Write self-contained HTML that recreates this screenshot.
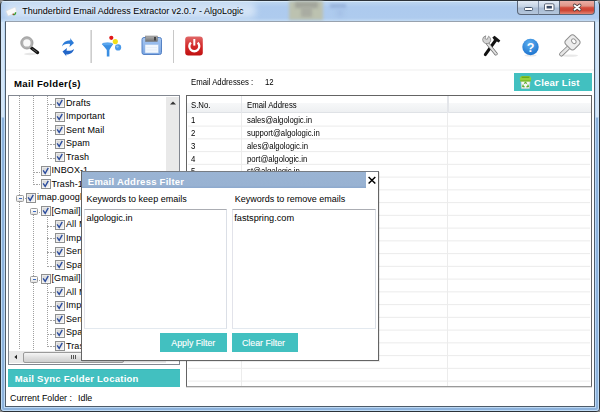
<!DOCTYPE html><html><head><meta charset="utf-8"><style>
*{margin:0;padding:0;box-sizing:border-box}
html,body{width:600px;height:412px;overflow:hidden;background:#8c8c8c}
body{position:relative;font-family:"Liberation Sans",sans-serif;color:#000}
.a{position:absolute}
.t{position:absolute;white-space:nowrap;line-height:1}
.btn{position:absolute;top:1px;height:14px;border:1px solid #5a6678;border-top:none}
.teal{background:#42c0c0}
.sep{position:absolute;width:1px;background:#b4b4b4}
.cb{position:absolute;width:10px;height:10px;border:1px solid #8f9090;background:linear-gradient(135deg,#d0d0d0,#f6f6f6);box-shadow:inset 0 0 0 1px rgba(255,255,255,0.5)}
.dv{position:absolute;width:1px;background:repeating-linear-gradient(180deg,#a0a0a0 0 1px,transparent 1px 2px)}
.dh{position:absolute;height:1px;background:repeating-linear-gradient(90deg,#a4a4a4 0 2px,transparent 2px 3px)}
.tr{position:absolute;white-space:nowrap;line-height:1;font-size:9px;letter-spacing:0.1px}
.pm{position:absolute;width:8px;height:7px;border:1px solid #9a9a9a;border-radius:1.5px;background:linear-gradient(180deg,#fff,#e2e2e2)}
.pm:after{content:"";position:absolute;left:1.5px;top:2px;width:3px;height:1.2px;background:#3a6ac0}
.gl{position:absolute;left:188px;width:402px;height:1px;background:#ececec}
.gt{position:absolute;font-size:8.6px;white-space:nowrap;line-height:1;transform:scaleX(0.905);transform-origin:0 0}
</style></head><body>
<div class="a" style="left:0;top:0;width:600px;height:412px;border:1px solid #2c3238;border-radius:5px 5px 4px 4px;background:linear-gradient(180deg,#d0e4f8 0,#d0e4f8 1px,#bcd5f0 1px,#adcaee 6px,#aecbee 17px,#bcd6f2 19px,#c4dcf4 20px,#c4dcf4 21px,#d4e6f8 21px,#d4e6f8 116px,#8cb2dc 117px,#8cb2dc 100%)"></div>
<div class="a" style="left:1px;top:117px;width:598px;height:294px;border:1px solid #c0dcf6;border-top:none;border-radius:0 0 3px 3px"></div>
<div class="a" style="left:1px;top:1px;width:598px;height:2px;border-radius:4px 4px 0 0;border-top:1px solid #d8eafa"></div>
<div class="a" style="left:289px;top:1px;width:34px;height:19px;background:#bcc2b0;filter:blur(1.5px)"></div>
<div class="a" style="left:295px;top:2px;width:23px;height:6px;background:#a2a59c;filter:blur(1.6px)"></div>
<div class="a" style="left:301px;top:7px;width:11px;height:10px;background:#a9aca2;filter:blur(1.6px)"></div>
<div class="a" style="left:330px;top:4px;width:16px;height:4px;background:#98b4dc;filter:blur(1.5px)"></div>
<div class="a" style="left:337px;top:9px;width:6px;height:8px;background:#a4c0e6;filter:blur(2px)"></div>
<div class="a" style="left:520px;top:1px;width:1px;height:1px"></div>
<div class="a" style="left:4px;top:3px;width:252px;height:15px;background:rgba(235,244,252,0.6);filter:blur(3px);border-radius:6px"></div>
<svg class="a" style="left:4px;top:3.5px" width="14" height="13"><path d="M2 7 L11.5 3 L12.5 8.5 L4 12Z" fill="#fafafa" stroke="#d8d8d8" stroke-width="0.5"/><path d="M9 10.5 Q11.5 11 11.6 8.2" fill="none" stroke="#3aa030" stroke-width="1.4"/><circle cx="9.2" cy="10.3" r="0.8" fill="#a04020"/></svg>
<div class="t" style="left:22.3px;top:7px;font-size:9px;color:#000;text-shadow:0 0 4px rgba(235,245,255,0.9)">Thunderbird Email Address Extractor v2.0.7 - AlgoLogic</div>
<div class="btn" style="left:517px;width:22px;border-radius:0 0 0 4px;background:linear-gradient(180deg,#e3ebf5,#c3d2e4 45%,#a9bcd4 55%,#b4c6dc)"></div>
<div class="btn" style="left:538px;width:22px;border-left:1px solid #8090a8;background:linear-gradient(180deg,#e3ebf5,#c3d2e4 45%,#a9bcd4 55%,#b4c6dc)"></div>
<div class="btn" style="left:559px;width:36px;border-radius:0 0 4px 0;background:linear-gradient(180deg,#eaaea6 0,#e09486 38%,#d24c3c 52%,#cc4434 72%,#e28474 100%)"></div>
<div class="a" style="left:524px;top:7px;width:9px;height:4px;background:#fff;border:1px solid #44546a;border-radius:1.5px"></div>
<svg class="a" style="left:540px;top:0px" width="18" height="14"><rect x="4.5" y="3.8" width="9.5" height="6.8" rx="1.2" fill="#fff" stroke="#5a6678" stroke-width="1"/><rect x="6.6" y="5.9" width="5.3" height="2.6" fill="#3a4a64"/></svg>
<svg class="a" style="left:570px;top:1px" width="14" height="12"><path d="M4.6 4.4 L9.7 8.6 M9.7 4.4 L4.6 8.6" stroke="#4a3a3a" stroke-width="3.4" stroke-linecap="round"/><path d="M4.6 4.4 L9.7 8.6 M9.7 4.4 L4.6 8.6" stroke="#fff" stroke-width="1.9" stroke-linecap="round"/></svg>
<div class="a" style="left:4px;top:21px;width:592px;height:387px;border:1px solid #bcd8f4;border-top:none"></div>
<div class="a" style="left:5px;top:21px;width:590px;height:386px;border:1px solid #4e5c6a;border-top-color:#98a2ae;background:#fff"></div>
<div class="a" style="left:6px;top:69px;width:588px;height:2px;background:#f7f7f7"></div>
<div class="sep" style="left:90px;top:30px;width:2px;height:33px;background:linear-gradient(90deg,#e0e0e0 50%,#cdcdcd 50%)"></div>
<div class="sep" style="left:173px;top:30px;height:33px;background:#c8c8c8"></div>

<svg class="a" style="left:0;top:0" width="600" height="70">
 <defs>
  <linearGradient id="gpow" x1="0" y1="0" x2="0" y2="1"><stop offset="0" stop-color="#e06868"/><stop offset="0.5" stop-color="#d42a2a"/><stop offset="1" stop-color="#c01010"/></linearGradient>
  <linearGradient id="gflop" x1="0" y1="0" x2="0" y2="1"><stop offset="0" stop-color="#a8c8f2"/><stop offset="1" stop-color="#78a4e2"/></linearGradient><linearGradient id="gshut" x1="0" y1="0" x2="0" y2="1"><stop offset="0" stop-color="#b4b4b4"/><stop offset="1" stop-color="#6e6e6e"/></linearGradient>
  <radialGradient id="ghelp" cx="0.45" cy="0.3" r="0.75"><stop offset="0" stop-color="#5fb0f0"/><stop offset="1" stop-color="#1a70cc"/></radialGradient>
 </defs>
 <!-- magnifier -->
 <ellipse cx="30" cy="54" rx="6" ry="1.2" fill="#e6e6e6"/>
 <line x1="31.5" y1="48" x2="37.6" y2="52.6" stroke="#111" stroke-width="3.2" stroke-linecap="round"/>
 <line x1="32.5" y1="49" x2="36.8" y2="52" stroke="#777" stroke-width="0.8" stroke-linecap="round"/>
 <circle cx="26.9" cy="42.9" r="5" fill="#f8f8f8" stroke="#b0b0b0" stroke-width="2.6"/>
 <circle cx="26.9" cy="42.9" r="6.2" fill="none" stroke="#8a8a8a" stroke-width="0.5"/>
 <!-- refresh -->
 <path d="M62 46.5 C63 42 66 40.5 70.5 40.2 L70 38 L74 43 L69.5 47 L70 44 C66 43.5 63.5 44.5 62 46.5Z" fill="#2b7bd8"/>
 <path d="M74 49 C73 53 70 54.5 66 54.5 L66.5 56.5 L62.5 51.5 L67 48 L66.5 50.8 C70 51 72.5 50.5 74 49Z" fill="#2266c8"/>
 <!-- funnel -->
 <path d="M101.8 44 Q107.5 41.6 113.2 44 Q111 47 109.4 50 L109.4 56.6 L106.8 56.6 L106.8 50 Q104.6 47 101.8 44Z" fill="#3a8ee2"/>
 <ellipse cx="107.5" cy="43.9" rx="5.2" ry="1.3" fill="#5aa6ee"/>
 <circle cx="111.3" cy="37.8" r="2.1" fill="#e01818"/>
 <circle cx="115.3" cy="41.6" r="2.6" fill="#f2e01a"/>
 <circle cx="118.1" cy="47.4" r="3.1" fill="#4a9aea"/>
 <circle cx="117.4" cy="46.6" r="1.2" fill="#8cc4f6"/>
 <!-- floppy -->
 <rect x="142" y="37.5" width="19.5" height="17" rx="2" fill="url(#gflop)" stroke="#5682c4"/>
 <rect x="145.5" y="36" width="12" height="5.5" fill="url(#gshut)" stroke="#777" stroke-width="0.5"/>
 <rect x="154" y="37" width="2" height="3.5" fill="#444"/>
 <rect x="145" y="44.5" width="13.5" height="8.5" fill="#f2f7fd" stroke="#9cbce6" stroke-width="0.5"/><path d="M146.5 47.5 H157 M146.5 50 H157" stroke="#dce8f6" stroke-width="0.6"/>
 <!-- power -->
 <rect x="185.2" y="36.5" width="17.6" height="19" rx="3" fill="url(#gpow)"/>
 <path d="M190.9 42.6 A5 5 0 1 0 197.7 42.6" fill="none" stroke="#fff" stroke-width="2.3"/>
 <line x1="194.3" y1="39" x2="194.3" y2="45.6" stroke="#fff" stroke-width="2"/>
 <!-- tools -->
 <line x1="495.5" y1="40.5" x2="485.3" y2="54.6" stroke="#111" stroke-width="3" stroke-linecap="round"/>
 <path d="M492.3 37.6 L494.6 35.8 L500.3 40.6 L498.8 42.6 L494.3 40.3Z" fill="#151515"/>
 <line x1="487.5" y1="43.5" x2="496" y2="53.8" stroke="#666" stroke-width="3.4" stroke-linecap="round"/>
 <line x1="487.5" y1="43.5" x2="496" y2="53.8" stroke="#e0e0e0" stroke-width="2" stroke-linecap="round"/>
 <path d="M482.6 39.5 A4.2 4.2 0 0 0 490 42.2 A4.2 4.2 0 0 0 488.6 36.2 L487.2 39.4 L485 38.6 L485.8 35.8 A4.2 4.2 0 0 0 482.6 39.5Z" fill="#d4d4d4" stroke="#777" stroke-width="0.7"/>
 <!-- help -->
 <ellipse cx="530.5" cy="55.5" rx="6" ry="1" fill="#e8e8e8"/>
 <circle cx="530.5" cy="47" r="8.2" fill="url(#ghelp)"/>
 <text x="530.5" y="52.3" font-family="Liberation Sans" font-weight="bold" font-size="12.5" fill="#fff" text-anchor="middle">?</text>
 <!-- key -->
 <ellipse cx="570" cy="55.6" rx="8" ry="1.1" fill="#e8e8e8"/>
 <line x1="569" y1="47" x2="561.3" y2="54.3" stroke="#8a8a8a" stroke-width="4.4" stroke-linecap="round"/>
 <line x1="569" y1="47" x2="561.3" y2="54.3" stroke="#e6e6e6" stroke-width="2.6" stroke-linecap="round"/>
 <rect x="566.3" y="36.2" width="12.4" height="12.4" rx="3.2" fill="#ececec" stroke="#8e8e8e" stroke-width="1" transform="rotate(45 572.5 42.4)"/>
 <ellipse cx="573.8" cy="41.2" rx="2.6" ry="1.9" fill="#fff" stroke="#9a9a9a" stroke-width="1" transform="rotate(45 573.8 41.2)"/>
</svg>

<div class="t" style="left:14px;top:78.6px;font-size:9.6px;letter-spacing:0.32px;font-weight:bold">Mail Folder(s)</div>
<div class="a" style="left:8px;top:95px;width:172px;height:270px;border:1px solid #828790;background:#fff;overflow:hidden"></div>
<div class="dv" style="left:19px;top:96.0px;height:254.0px"></div>
<div class="dv" style="left:33px;top:96.0px;height:87.8px"></div>
<div class="dv" style="left:33px;top:210.8px;height:139.2px"></div>
<div class="dv" style="left:47px;top:96.0px;height:60.8px"></div>
<div class="dv" style="left:47px;top:214.8px;height:50.0px"></div>
<div class="dv" style="left:47px;top:282.2px;height:63.5px"></div>
<div class="dh" style="left:47px;top:104px;width:8px"></div>
<div class="cb" style="left:55px;top:98.00px"></div>
<svg class="a" style="left:55px;top:98.00px" width="10" height="10"><path d="M2.1 4.4 L4.2 7.4 L7.3 1.9" fill="none" stroke="#2b4c9e" stroke-width="1.35"/></svg>
<div class="tr" style="left:66px;top:98.55px">Drafts</div>
<div class="dh" style="left:47px;top:118px;width:8px"></div>
<div class="cb" style="left:55px;top:111.50px"></div>
<svg class="a" style="left:55px;top:111.50px" width="10" height="10"><path d="M2.1 4.4 L4.2 7.4 L7.3 1.9" fill="none" stroke="#2b4c9e" stroke-width="1.35"/></svg>
<div class="tr" style="left:66px;top:112.05px">Important</div>
<div class="dh" style="left:47px;top:130px;width:8px"></div>
<div class="cb" style="left:55px;top:125.00px"></div>
<svg class="a" style="left:55px;top:125.00px" width="10" height="10"><path d="M2.1 4.4 L4.2 7.4 L7.3 1.9" fill="none" stroke="#2b4c9e" stroke-width="1.35"/></svg>
<div class="tr" style="left:66px;top:125.55px">Sent Mail</div>
<div class="dh" style="left:47px;top:144px;width:8px"></div>
<div class="cb" style="left:55px;top:138.50px"></div>
<svg class="a" style="left:55px;top:138.50px" width="10" height="10"><path d="M2.1 4.4 L4.2 7.4 L7.3 1.9" fill="none" stroke="#2b4c9e" stroke-width="1.35"/></svg>
<div class="tr" style="left:66px;top:139.05px">Spam</div>
<div class="dh" style="left:47px;top:158px;width:8px"></div>
<div class="cb" style="left:55px;top:152.00px"></div>
<svg class="a" style="left:55px;top:152.00px" width="10" height="10"><path d="M2.1 4.4 L4.2 7.4 L7.3 1.9" fill="none" stroke="#2b4c9e" stroke-width="1.35"/></svg>
<div class="tr" style="left:66px;top:152.55px">Trash</div>
<div class="dh" style="left:33px;top:172px;width:7px"></div>
<div class="cb" style="left:40.5px;top:165.50px"></div>
<svg class="a" style="left:40.5px;top:165.50px" width="10" height="10"><path d="M2.1 4.4 L4.2 7.4 L7.3 1.9" fill="none" stroke="#2b4c9e" stroke-width="1.35"/></svg>
<div class="tr" style="left:51.5px;top:166.05px">INBOX-1</div>
<div class="dh" style="left:33px;top:184px;width:7px"></div>
<div class="cb" style="left:40.5px;top:179.00px"></div>
<svg class="a" style="left:40.5px;top:179.00px" width="10" height="10"><path d="M2.1 4.4 L4.2 7.4 L7.3 1.9" fill="none" stroke="#2b4c9e" stroke-width="1.35"/></svg>
<div class="tr" style="left:51.5px;top:179.55px">Trash-1</div>
<div class="dh" style="left:19px;top:198px;width:7px"></div>
<div class="pm" style="left:16px;top:195px"></div>
<div class="cb" style="left:26px;top:192.50px"></div>
<svg class="a" style="left:26px;top:192.50px" width="10" height="10"><path d="M2.1 4.4 L4.2 7.4 L7.3 1.9" fill="none" stroke="#2b4c9e" stroke-width="1.35"/></svg>
<div class="tr" style="left:37px;top:193.05px">imap.googlemail.com</div>
<div class="dh" style="left:33px;top:212px;width:7px"></div>
<div class="pm" style="left:30px;top:208px"></div>
<div class="cb" style="left:40.5px;top:206.00px"></div>
<svg class="a" style="left:40.5px;top:206.00px" width="10" height="10"><path d="M2.1 4.4 L4.2 7.4 L7.3 1.9" fill="none" stroke="#2b4c9e" stroke-width="1.35"/></svg>
<div class="tr" style="left:51.5px;top:206.55px">[Gmail]</div>
<div class="dh" style="left:47px;top:226px;width:8px"></div>
<div class="cb" style="left:55px;top:219.50px"></div>
<svg class="a" style="left:55px;top:219.50px" width="10" height="10"><path d="M2.1 4.4 L4.2 7.4 L7.3 1.9" fill="none" stroke="#2b4c9e" stroke-width="1.35"/></svg>
<div class="tr" style="left:66px;top:220.05px">All Mail</div>
<div class="dh" style="left:47px;top:238px;width:8px"></div>
<div class="cb" style="left:55px;top:233.00px"></div>
<svg class="a" style="left:55px;top:233.00px" width="10" height="10"><path d="M2.1 4.4 L4.2 7.4 L7.3 1.9" fill="none" stroke="#2b4c9e" stroke-width="1.35"/></svg>
<div class="tr" style="left:66px;top:233.55px">Important</div>
<div class="dh" style="left:47px;top:252px;width:8px"></div>
<div class="cb" style="left:55px;top:246.50px"></div>
<svg class="a" style="left:55px;top:246.50px" width="10" height="10"><path d="M2.1 4.4 L4.2 7.4 L7.3 1.9" fill="none" stroke="#2b4c9e" stroke-width="1.35"/></svg>
<div class="tr" style="left:66px;top:247.05px">Sent Mail</div>
<div class="dh" style="left:47px;top:266px;width:8px"></div>
<div class="cb" style="left:55px;top:260.00px"></div>
<svg class="a" style="left:55px;top:260.00px" width="10" height="10"><path d="M2.1 4.4 L4.2 7.4 L7.3 1.9" fill="none" stroke="#2b4c9e" stroke-width="1.35"/></svg>
<div class="tr" style="left:66px;top:260.55px">Spam</div>
<div class="dh" style="left:33px;top:280px;width:7px"></div>
<div class="pm" style="left:30px;top:276px"></div>
<div class="cb" style="left:40.5px;top:273.50px"></div>
<svg class="a" style="left:40.5px;top:273.50px" width="10" height="10"><path d="M2.1 4.4 L4.2 7.4 L7.3 1.9" fill="none" stroke="#2b4c9e" stroke-width="1.35"/></svg>
<div class="tr" style="left:51.5px;top:274.05px">[Gmail]</div>
<div class="dh" style="left:47px;top:292px;width:8px"></div>
<div class="cb" style="left:55px;top:287.00px"></div>
<svg class="a" style="left:55px;top:287.00px" width="10" height="10"><path d="M2.1 4.4 L4.2 7.4 L7.3 1.9" fill="none" stroke="#2b4c9e" stroke-width="1.35"/></svg>
<div class="tr" style="left:66px;top:287.55px">All Mail</div>
<div class="dh" style="left:47px;top:306px;width:8px"></div>
<div class="cb" style="left:55px;top:300.50px"></div>
<svg class="a" style="left:55px;top:300.50px" width="10" height="10"><path d="M2.1 4.4 L4.2 7.4 L7.3 1.9" fill="none" stroke="#2b4c9e" stroke-width="1.35"/></svg>
<div class="tr" style="left:66px;top:301.05px">Important</div>
<div class="dh" style="left:47px;top:320px;width:8px"></div>
<div class="cb" style="left:55px;top:314.00px"></div>
<svg class="a" style="left:55px;top:314.00px" width="10" height="10"><path d="M2.1 4.4 L4.2 7.4 L7.3 1.9" fill="none" stroke="#2b4c9e" stroke-width="1.35"/></svg>
<div class="tr" style="left:66px;top:314.55px">Sent Mail</div>
<div class="dh" style="left:47px;top:334px;width:8px"></div>
<div class="cb" style="left:55px;top:327.50px"></div>
<svg class="a" style="left:55px;top:327.50px" width="10" height="10"><path d="M2.1 4.4 L4.2 7.4 L7.3 1.9" fill="none" stroke="#2b4c9e" stroke-width="1.35"/></svg>
<div class="tr" style="left:66px;top:328.05px">Spam</div>
<div class="dh" style="left:47px;top:346px;width:8px"></div>
<div class="cb" style="left:55px;top:341.00px"></div>
<svg class="a" style="left:55px;top:341.00px" width="10" height="10"><path d="M2.1 4.4 L4.2 7.4 L7.3 1.9" fill="none" stroke="#2b4c9e" stroke-width="1.35"/></svg>
<div class="tr" style="left:66px;top:341.55px">Trash</div>
<div class="a" style="left:166px;top:97px;width:13px;height:254px;background:#e9e9e9"></div>
<svg class="a" style="left:169px;top:100px" width="8" height="6"><path d="M1 4.5 L4 1.5 L7 4.5Z" fill="#333"/></svg>
<div class="a" style="left:9px;top:351px;width:157px;height:12px;background:#e9e9e9"></div>
<svg class="a" style="left:13px;top:353px" width="6" height="8"><path d="M4 1.8 L1.4 4 L4 6.2Z" fill="#222"/></svg>
<div class="a" style="left:23px;top:352px;width:101px;height:11px;border:1px solid #9a9a9a;border-radius:2px;background:linear-gradient(180deg,#f6f6f6,#e0e0e0 50%,#cfcfcf)"></div>
<div class="a" style="left:71px;top:355px;width:1px;height:4px;background:#555"></div>
<div class="a" style="left:73px;top:355px;width:1px;height:4px;background:#555"></div>
<div class="a" style="left:75px;top:355px;width:1px;height:4px;background:#555"></div>
<div class="a teal" style="left:8px;top:369px;width:172px;height:18px;border-top:1px solid #38baba"></div>
<div class="t" style="left:14.7px;top:374px;font-size:9.5px;letter-spacing:0.25px;font-weight:bold;color:#fff">Mail Sync Folder Location</div>
<div class="t" style="left:10px;top:393.8px;font-size:8.85px">Current Folder :</div>
<div class="t" style="left:78px;top:393.8px;font-size:8.85px">Idle</div>
<div class="gt" style="left:190.8px;top:78.4px">Email Addresses :</div>
<div class="gt" style="left:264.6px;top:78.4px">12</div>
<div class="a teal" style="left:514px;top:73px;width:78px;height:18px"></div>
<svg class="a" style="left:519px;top:75px" width="13" height="15">
<path d="M2 6 L11 6 L10.4 13.4 L2.6 13.4Z" fill="#f6f6f6" stroke="#cfcfcf" stroke-width="0.6"/>
<path d="M0.8 3.4 Q1 1.2 3.2 1.1 L9.8 1.1 Q12 1.2 12.2 3.4 L11.6 6.2 L1.4 6.2Z" fill="#94d03a"/>
<path d="M2.4 1.4 L10.6 1.4 L10.2 3 L2.8 3Z" fill="#6aaa1c"/>
<path d="M1.2 5.2 L11.8 5.2 L11.6 6.4 L1.4 6.4Z" fill="#78b828"/>
<path d="M5.2 8.6 L6.5 7.3 L7.8 8.6 M8.8 9.6 L9.3 11.4 L7.4 11.8 M4.2 9.6 L3.8 11.4 L5.6 11.8" fill="none" stroke="#5cae2e" stroke-width="1.3"/>
</svg>
<div class="t" style="left:534px;top:78.2px;font-size:9.6px;letter-spacing:0.2px;font-weight:bold;color:#fff">Clear List</div>
<div class="a" style="left:186px;top:95px;width:406px;height:292px;border:1px solid #646464;border-bottom-color:#9a9a9a;background:#fff;box-shadow:0 1px 0 #dedede"></div>
<div class="a" style="left:187px;top:103px;width:404px;height:9px;background:linear-gradient(180deg,#f7f8f9,#eef0f2)"></div>
<div class="a" style="left:187px;top:112px;width:404px;height:1px;background:#dfe2e6"></div>
<div class="a" style="left:241px;top:96px;width:1px;height:17px;background:#e4e6ea"></div>
<div class="a" style="left:447px;top:96px;width:2px;height:17px;background:#e4e6ea"></div>
<div class="gt" style="left:191px;top:100.8px">S.No.</div>
<div class="gt" style="left:246.5px;top:100.8px">Email Address</div>
<svg class="a" style="left:0;top:0" width="600" height="412"><rect x="188" y="125.60" width="402" height="1" fill="#ebebeb"/><rect x="188" y="138.35" width="402" height="1" fill="#ebebeb"/><rect x="188" y="151.10" width="402" height="1" fill="#ebebeb"/><rect x="188" y="163.85" width="402" height="1" fill="#ebebeb"/><rect x="188" y="176.60" width="402" height="1" fill="#ebebeb"/><rect x="188" y="189.35" width="402" height="1" fill="#ebebeb"/><rect x="188" y="202.10" width="402" height="1" fill="#ebebeb"/><rect x="188" y="214.85" width="402" height="1" fill="#ebebeb"/><rect x="188" y="227.60" width="402" height="1" fill="#ebebeb"/><rect x="188" y="240.35" width="402" height="1" fill="#ebebeb"/><rect x="188" y="253.10" width="402" height="1" fill="#ebebeb"/><rect x="188" y="265.85" width="402" height="1" fill="#ebebeb"/><rect x="188" y="278.60" width="402" height="1" fill="#ebebeb"/><rect x="188" y="291.35" width="402" height="1" fill="#ebebeb"/><rect x="188" y="304.10" width="402" height="1" fill="#ebebeb"/><rect x="188" y="316.85" width="402" height="1" fill="#ebebeb"/><rect x="188" y="329.60" width="402" height="1" fill="#ebebeb"/><rect x="188" y="342.35" width="402" height="1" fill="#ebebeb"/><rect x="188" y="355.10" width="402" height="1" fill="#ebebeb"/><rect x="188" y="367.85" width="402" height="1" fill="#ebebeb"/><rect x="188" y="380.60" width="402" height="1" fill="#ebebeb"/></svg>
<div class="a" style="left:241px;top:113px;width:1px;height:273px;background:#ececec"></div>
<div class="a" style="left:447px;top:113px;width:1px;height:273px;background:#ececec"></div>
<div class="gt" style="left:191px;top:116.40px">1</div>
<div class="gt" style="left:246.5px;top:116.40px">sales@algologic.in</div>
<div class="gt" style="left:191px;top:129.15px">2</div>
<div class="gt" style="left:246.5px;top:129.15px">support@algologic.in</div>
<div class="gt" style="left:191px;top:141.90px">3</div>
<div class="gt" style="left:246.5px;top:141.90px">ales@algologic.in</div>
<div class="gt" style="left:191px;top:154.65px">4</div>
<div class="gt" style="left:246.5px;top:154.65px">port@algologic.in</div>
<div class="gt" style="left:191px;top:167.40px">5</div>
<div class="gt" style="left:246.5px;top:167.40px">st@algologic.in</div>
<div class="a" style="left:81px;top:171px;width:298px;height:190px;border:1px solid #646464;border-top-color:#767c84;background:#fff;box-shadow:1px 1px 0 rgba(0,0,0,0.08)"></div>
<div class="a" style="left:82px;top:172px;width:296px;height:16px;background:linear-gradient(180deg,#9ab4d4 0,#98b2d2 14px,#8eaace 15px)"></div>
<div class="t" style="left:87.8px;top:177px;font-size:9.5px;letter-spacing:0.25px;font-weight:bold;color:#fff">Email Address Filter</div>
<div class="a" style="left:366px;top:172px;width:12px;height:16px;background:#fff"></div>
<svg class="a" style="left:367px;top:175px" width="10" height="10"><path d="M1.6 1.9 L8.3 8.6 M8.3 1.9 L1.6 8.6" stroke="#000" stroke-width="1.45"/></svg>
<div class="t" style="left:86.6px;top:194.8px;font-size:9px">Keywords to keep emails</div>
<div class="t" style="left:234.7px;top:194.8px;font-size:9px">Keywords to remove emails</div>
<div class="a" style="left:84px;top:209px;width:143px;height:120px;border:1px solid #abadb3;border-color:#abadb3 #dbdfe6 #e3e9ef #e2e3ea;background:#fff"></div>
<div class="a" style="left:232px;top:209px;width:144px;height:120px;border:1px solid #abadb3;border-color:#abadb3 #dbdfe6 #e3e9ef #e2e3ea;background:#fff"></div>
<div class="t" style="left:86.6px;top:213.6px;font-size:9.2px">algologic.in</div>
<div class="t" style="left:234.3px;top:213.6px;font-size:9.2px">fastspring.com</div>
<div class="a teal" style="left:160px;top:333px;width:67px;height:19px"></div>
<div class="a teal" style="left:232px;top:333px;width:66px;height:19px"></div>
<div class="t" style="left:171.3px;top:338.5px;font-size:8.8px;color:#fff;-webkit-text-stroke:0.12px #fff">Apply Filter</div>
<div class="t" style="left:242px;top:338.5px;font-size:8.8px;color:#fff;-webkit-text-stroke:0.12px #fff">Clear Filter</div>
</body></html>
